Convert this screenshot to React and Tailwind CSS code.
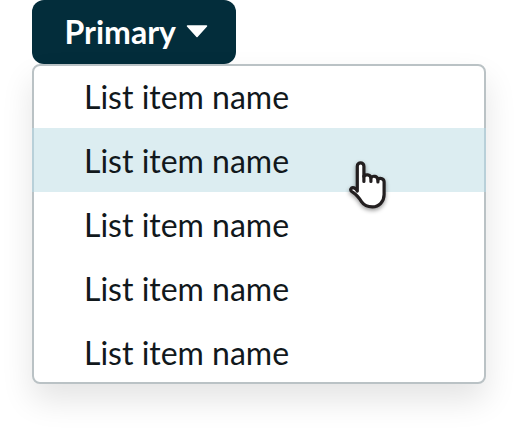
import React from "react";

const items = [
  { id: 1, name: "List item name" },
  { id: 2, name: "List item name", active: true },
  { id: 3, name: "List item name" },
  { id: 4, name: "List item name" },
  { id: 5, name: "List item name" },
];

function HandCursor() {
  return (
    <svg
      className="absolute left-[343px] top-[156px] h-[60px] w-[48px] drop-shadow-[0_2px_2px_rgba(0,0,0,0.4)]"
      viewBox="0.4 0 48 60"
      fill="none"
      stroke="#231f20"
      strokeWidth="3.200"
      strokeLinecap="round"
      strokeLinejoin="round"
    >
      <path
        d="M14.700 35V10.200C14.700 5.800 21.300 5.800 21.300 10.200V20.400C22.900 17.900 27.500 18.400 28.300 21.600C30.500 19.300 34.500 20 35.300 23.400C37.800 21.200 41.500 22.800 41.500 26V38.500C41.500 45.500 36.500 50.900 29.800 50.900C24.500 50.900 21.500 49.500 19.300 46.200C16.500 42 14.400 38.800 10.700 36.700C8.500 35.500 7.500 34.700 8.300 33C9.500 30.500 13.300 31.800 14.700 35Z"
        fill="white"
      />
      <path d="M21.300 20V25.500M28.300 21.500V25.500M35.300 23.300V26" />
    </svg>
  );
}

export default function App() {
  return (
    <div className="relative h-[440px] w-[518px] overflow-hidden bg-white pl-8 font-['Lato',sans-serif] text-[32px] leading-[66px]">
      <button className="flex h-16 w-[204px] items-center rounded-xl bg-[#032d3b] pl-[32.5px] font-bold text-white">
        <span className="leading-[64px]">Primary</span>
        <svg className="-mt-0.5 ml-[10px] h-[13px] w-[22px]" viewBox="0 0 22 13">
          <path
            d="M1.500 1H20.500L11 11.500Z"
            fill="white"
            stroke="white"
            strokeWidth="1.500"
            strokeLinejoin="round"
          />
        </svg>
      </button>
      <ul className="h-80 w-[454px] rounded-lg border-2 border-[#bac2c5] bg-white text-[#11181c] shadow-[0_16px_32px_rgba(0,0,0,0.11)]">
        {items.map((item) => (
          <li
            key={item.id}
            className={
              item.active
                ? "-mx-0.5 h-16 border-x-2 border-[#b8d0d9] bg-[#dcedf1] pl-[50px]"
                : "h-16 pl-[50px] first:-mt-0.5"
            }
          >
            {item.name}
          </li>
        ))}
      </ul>
      <HandCursor />
    </div>
  );
}
